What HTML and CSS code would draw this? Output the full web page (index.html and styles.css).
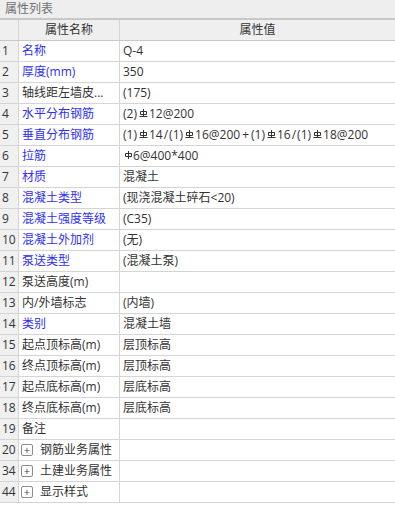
FILE: index.html
```html
<!DOCTYPE html>
<html lang="zh">
<head>
<meta charset="utf-8">
<title>属性列表</title>
<link rel="stylesheet" href="styles.css">
</head>
<body>
<div class="panel">
  <div class="title">属性列表</div>
  <div class="row head">
    <div class="c num"></div>
    <div class="c name center">属性名称</div>
    <div class="c val center">属性值</div>
  </div>
  <div class="row"><div class="c num">1</div><div class="c name blue">名称</div><div class="c val">Q-4</div></div>
  <div class="row"><div class="c num">2</div><div class="c name blue">厚度(mm)</div><div class="c val">350</div></div>
  <div class="row"><div class="c num">3</div><div class="c name">轴线距左墙皮...</div><div class="c val">(175)</div></div>
  <div class="row"><div class="c num">4</div><div class="c name blue">水平分布钢筋</div><div class="c val">(2)<svg class="rb" viewBox="0 0 9 8" width="9" height="8"><path d="M4.5 0V7.5M1.5 2.5H7.5V5.5H1.5ZM0.5 7.5H8.5"/></svg>12@200</div></div>
  <div class="row"><div class="c num">5</div><div class="c name blue">垂直分布钢筋</div><div class="c val">(1)<svg class="rb" viewBox="0 0 9 8" width="9" height="8"><path d="M4.5 0V7.5M1.5 2.5H7.5V5.5H1.5ZM0.5 7.5H8.5"/></svg>14<span class="op">/</span>(1)<svg class="rb" viewBox="0 0 9 8" width="9" height="8"><path d="M4.5 0V7.5M1.5 2.5H7.5V5.5H1.5ZM0.5 7.5H8.5"/></svg>16@200<span class="op plus">+</span>(1)<svg class="rb" viewBox="0 0 9 8" width="9" height="8"><path d="M4.5 0V7.5M1.5 2.5H7.5V5.5H1.5ZM0.5 7.5H8.5"/></svg>16<span class="op">/</span>(1)<svg class="rb" viewBox="0 0 9 8" width="9" height="8"><path d="M4.5 0V7.5M1.5 2.5H7.5V5.5H1.5ZM0.5 7.5H8.5"/></svg>18@200</div></div>
  <div class="row"><div class="c num">6</div><div class="c name blue">拉筋</div><div class="c val"><svg class="rb rb1" viewBox="0 0 8 8" width="8" height="8"><path d="M3.5 0V8M0.5 2.5H6.5V5.5H0.5Z"/></svg>6@400*400</div></div>
  <div class="row"><div class="c num">7</div><div class="c name blue">材质</div><div class="c val">混凝土</div></div>
  <div class="row"><div class="c num">8</div><div class="c name blue">混凝土类型</div><div class="c val">(现浇混凝土碎石&lt;20)</div></div>
  <div class="row"><div class="c num">9</div><div class="c name blue">混凝土强度等级</div><div class="c val">(C35)</div></div>
  <div class="row"><div class="c num">10</div><div class="c name blue">混凝土外加剂</div><div class="c val">(无)</div></div>
  <div class="row"><div class="c num">11</div><div class="c name blue">泵送类型</div><div class="c val">(混凝土泵)</div></div>
  <div class="row"><div class="c num">12</div><div class="c name">泵送高度(m)</div><div class="c val"></div></div>
  <div class="row"><div class="c num">13</div><div class="c name">内/外墙标志</div><div class="c val">(内墙)</div></div>
  <div class="row"><div class="c num">14</div><div class="c name blue">类别</div><div class="c val">混凝土墙</div></div>
  <div class="row"><div class="c num">15</div><div class="c name">起点顶标高(m)</div><div class="c val">层顶标高</div></div>
  <div class="row"><div class="c num">16</div><div class="c name">终点顶标高(m)</div><div class="c val">层顶标高</div></div>
  <div class="row"><div class="c num">17</div><div class="c name">起点底标高(m)</div><div class="c val">层底标高</div></div>
  <div class="row"><div class="c num">18</div><div class="c name">终点底标高(m)</div><div class="c val">层底标高</div></div>
  <div class="row"><div class="c num">19</div><div class="c name">备注</div><div class="c val"></div></div>
  <div class="row"><div class="c num">20</div><div class="c name"><span class="exp">+</span>钢筋业务属性</div><div class="c val"></div></div>
  <div class="row"><div class="c num">34</div><div class="c name"><span class="exp">+</span>土建业务属性</div><div class="c val"></div></div>
  <div class="row"><div class="c num">44</div><div class="c name"><span class="exp">+</span>显示样式</div><div class="c val"></div></div>
</div>
</body>
</html>
```
FILE: styles.css
```css
* { box-sizing: border-box; }
html, body {
  margin: 0;
  padding: 0;
  background: #ffffff;
}
body {
  width: 395px;
  height: 519px;
  overflow: hidden;
  font-family: "Open Sans", "Noto Sans CJK SC", sans-serif;
  font-size: 12px;
  color: #333333;
}
.panel {
  width: 395px;
  display: flex;
  flex-direction: column;
}
.title {
  height: 20px;
  background: #eeeeee;
  border-bottom: 2px solid #c8c8c8;
  color: #707070;
  padding-left: 5px;
  line-height: 17px;
  font-size: 12px;
}
.row {
  display: flex;
  height: 21px;
  border-bottom: 1px solid #d4d4d4;
}
.head {
  background: #efefef;
  border-bottom-color: #c8c8c8;
}
.c {
  height: 20px;
  line-height: 20px;
  white-space: nowrap;
  overflow: hidden;
}
.num {
  width: 19px;
  flex: none;
  background: #f0f0f0;
  border-right: 1px solid #d4d4d4;
  padding-left: 2px;
  font-size: 12px;
  color: #333;
}
.head .num { background: #efefef; }
.name {
  width: 101px;
  flex: none;
  border-right: 1px solid #d4d4d4;
  padding-left: 3px;
  display: flex;
  align-items: center;
}
.val {
  flex: 1;
  padding-left: 3px;
  display: flex;
  align-items: center;
}
.center { justify-content: center; padding-left: 0; }
.blue { color: #2f2ff5; }
.op { padding: 0 1px; }
.plus { padding: 0 2px; }
.rb {
  flex: none;
  align-self: flex-start;
  margin: 5px 1px 0 2px;
  fill: none;
  stroke: #333;
  stroke-width: 1;
}
.rb1 { margin-left: 2px; margin-right: 0; }
.exp {
  flex: none;
  width: 12px;
  height: 12px;
  border: 1px solid #8a8a8a;
  border-radius: 2px;
  margin-left: -1px;
  margin-right: 7px;
  display: flex;
  align-items: center;
  justify-content: center;
  font-size: 11px;
  line-height: 10px;
  color: #444;
}
```
